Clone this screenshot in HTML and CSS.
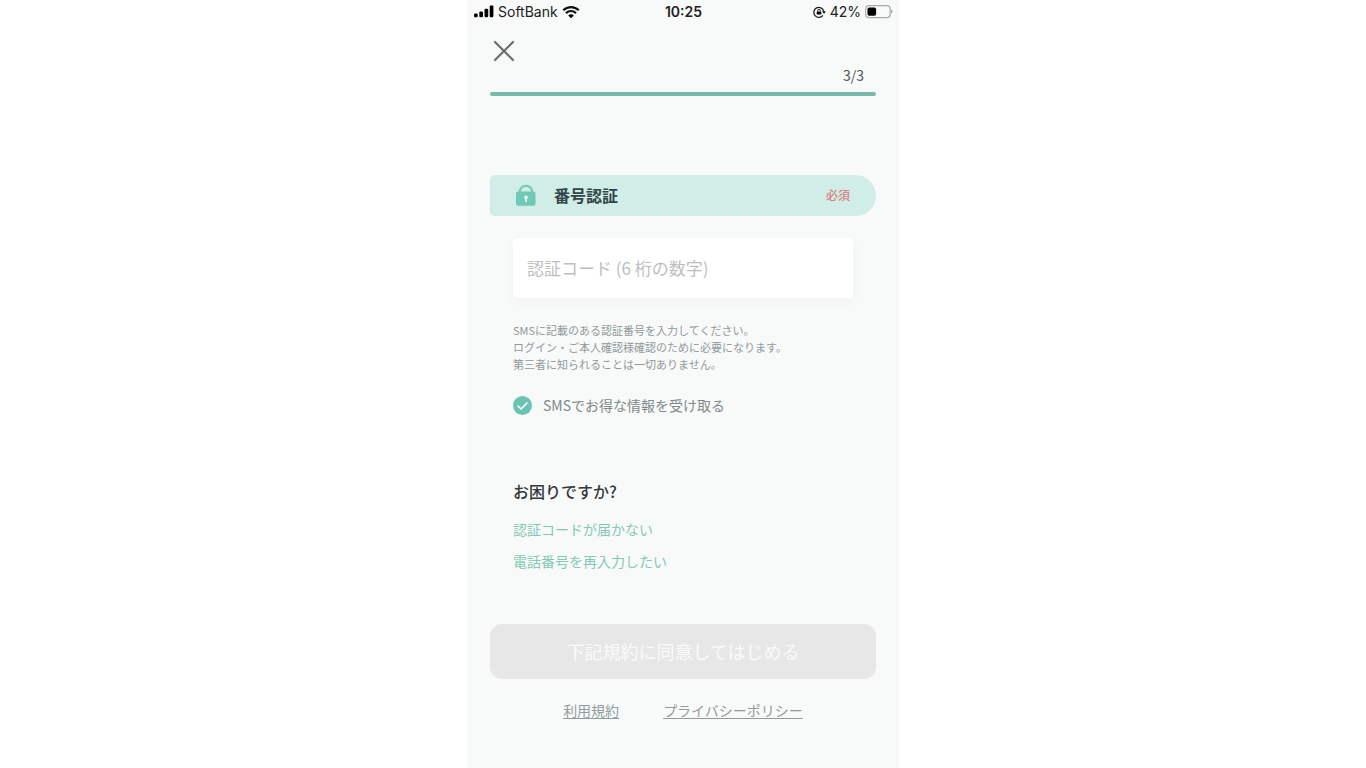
FILE: index.html
```html
<!DOCTYPE html>
<html lang="ja">
<head>
<meta charset="utf-8">
<meta name="viewport" content="width=device-width, initial-scale=1">
<title>番号認証</title>
<link rel="stylesheet" href="styles.css">
</head>
<body>
<div class="screen">
  <header class="status">
    <div class="status-left">
      <svg width="20" height="14" viewBox="0 0 20 14" aria-hidden="true"><rect x="0" y="8.500" width="3.700" height="3.800" rx="1.200"/><rect x="5.300" y="6.500" width="3.700" height="5.800" rx="1.200"/><rect x="10.500" y="3.700" width="3.700" height="8.600" rx="1.200"/><rect x="15.700" y=".4" width="3.700" height="11.900" rx="1.200"/></svg>
      <span>SoftBank</span>
      <svg width="18" height="14" viewBox="0 0 18 14" aria-hidden="true"><path d="M1.300 5.300C5.500 1 12.500 1 16.700 5.300" fill="none" stroke="#111" stroke-width="2.300"/><path d="M4 8.100c2.900-2.800 7.100-2.800 10 0" fill="none" stroke="#111" stroke-width="2.200"/><path d="M9 13.200 6.200 10.400c1.600-1.500 4-1.500 5.600 0z"/></svg>
    </div>
    <time class="clock">10:25</time>
    <div class="status-right">
      <svg width="14" height="14" viewBox="0 0 14 14" aria-hidden="true"><path d="M10.900 10.300A5 5 0 1 1 11.700 6.200" fill="none" stroke="#222" stroke-width="1.300"/><path d="M10.200 6.300h3.400l-1.500 2.800z"/><rect x="4.700" y="6.400" width="4.600" height="3.200" rx=".6"/><path d="M5.700 6.600V5.700a1.300 1.300 0 0 1 2.600 0v.9" fill="none" stroke="#222"/></svg>
      <span>42%</span>
      <svg width="28" height="14" viewBox="0 0 28 14" aria-hidden="true"><rect x=".7" y=".6" width="24.400" height="12" rx="3" fill="none" stroke="#aaa" stroke-width="1.200"/><rect x="2.500" y="2.400" width="8.600" height="8.400" rx="1.800" fill="#000"/><path d="M26 4.600c2 .6 2 3.400 0 4z" fill="#aaa"/></svg>
    </div>
  </header>

  <main class="content">
    <button class="close" type="button" aria-label="閉じる">
      <svg width="22" height="22" viewBox="0 0 22 22" aria-hidden="true"><path d="M2 2 20 20M20 2 2 20" fill="none" stroke="#6c6e6e" stroke-width="2.200" stroke-linecap="round"/></svg>
    </button>
    <div class="step">3/3</div>
    <div class="progress" role="progressbar" aria-label="進捗" aria-valuemin="0" aria-valuemax="3" aria-valuenow="3"></div>

    <form class="form">
      <div class="section-head">
        <svg class="lock" width="20" height="22" viewBox="0 0 20 22" aria-hidden="true"><path d="M4 9V7.200a6 5.400 0 0 1 12 0V9" fill="none" stroke="#78cbb9" stroke-width="2.200"/><rect x="0" y="7.500" width="19.500" height="14.300" rx="2" fill="#70c8b6"/><circle cx="10" cy="13.300" r="1.900" fill="#e4f7f3"/><path d="M9.100 14h1.800v4H9.100z" fill="#e4f7f3"/></svg>
        <label class="section-title" for="code">番号認証</label>
        <span class="required">必須</span>
      </div>
      <div class="fields">
        <input class="code" id="code" type="text" inputmode="numeric" maxlength="6" placeholder="認証コード (6 桁の数字)">
        <p class="note">SMSに記載のある認証番号を入力してください。<br>ログイン・ご本人確認様確認のために必要になります。<br>第三者に知られることは一切ありません。</p>
        <label class="optin"><input class="optin-box" type="checkbox" checked><span>SMSでお得な情報を受け取る</span></label>
        <section class="help">
          <h2 class="help-title">お困りですか?</h2>
          <a class="help-link" href="#resend">認証コードが届かない</a>
          <a class="help-link" href="#phone">電話番号を再入力したい</a>
        </section>
      </div>
      <button class="submit" type="submit" disabled>下記規約に同意してはじめる</button>
    </form>
    <nav class="legal">
      <a href="#terms">利用規約</a>
      <a href="#privacy">プライバシーポリシー</a>
    </nav>
  </main>
</div>
</body>
</html>
```
FILE: styles.css
```css
* { box-sizing: border-box; }

body {
  margin: 0;
  background: #fff;
  color: #505657;
  font-family: "Noto Sans CJK JP", sans-serif;
  font-size: 14px;
  line-height: 20px;
}

.screen {
  max-width: 432px;
  min-height: 100vh;
  margin: 0 auto;
  background: #f7faf9;
}

.status {
  display: grid;
  grid-template-columns: 1fr auto 1fr;
  align-items: center;
  height: 24px;
  padding: 0 6px 0 7px;
  color: #222;
  font-family: Inter, sans-serif;
  font-size: 14px;
}

.status-left,
.status-right {
  display: flex;
  align-items: center;
  gap: 4px;
}

.status-right { justify-content: flex-end; }
.clock { font-weight: 600; }
.status svg { flex: none; }

.content {
  display: flex;
  flex-direction: column;
  padding: 12px 23px 24px;
}

.close {
  display: flex;
  align-self: flex-start;
  padding: 4px 3px 3px;
  border: 0;
  background: none;
}

.step {
  padding-right: 12px;
  text-align: right;
}

.progress {
  height: 4px;
  margin-top: 7px;
  border-radius: 2px;
  background: #76baaa;
}

.form {
  display: flex;
  flex-direction: column;
  margin-top: 79px;
}

.section-head {
  display: flex;
  align-items: center;
  height: 41px;
  padding: 0 26px 2px;
  border-radius: 5px 21px 21px 5px;
  background: #d0ede8;
}

.section-title {
  margin-left: 18px;
  color: #304548;
  font-size: 16px;
  font-weight: 700;
}

.required {
  margin-left: auto;
  color: #dc817e;
  font-size: 12px;
  font-weight: 500;
}

.fields {
  display: flex;
  flex-direction: column;
  padding: 22px 23px 0;
}

.code {
  width: 100%;
  height: 60px;
  padding: 0 14px 2px;
  border: 0;
  border-radius: 4px;
  background: #fff;
  box-shadow: 0 4px 12px #00000008;
  color: #3d4344;
  font: inherit;
  font-size: 17px;
}

.code::placeholder { color: #bdbfbf; opacity: 1; }

.note {
  margin: 24px 0 0;
  color: #929999;
  font-size: 11px;
  line-height: 17px;
}

.optin {
  display: flex;
  align-items: center;
  gap: 11px;
  margin-top: 22px;
  color: #818989;
}

.optin-box {
  flex: none;
  width: 19px;
  height: 19px;
  margin: 0;
  appearance: none;
  border-radius: 50%;
  background: #6cc3b2 url("data:image/svg+xml,%3Csvg xmlns='http://www.w3.org/2000/svg' viewBox='0 0 19 19'%3E%3Cpath d='M5 10l3 3 6-6' fill='none' stroke='white' stroke-width='1.600' stroke-linecap='round' stroke-linejoin='round'/%3E%3C/svg%3E") center / contain no-repeat;
}

.help {
  display: flex;
  flex-direction: column;
  align-items: flex-start;
  gap: 12px;
  margin-top: 64px;
}

.help-title {
  margin: 0 0 4px;
  color: #333839;
  font-size: 16px;
  font-weight: 500;
  line-height: 24px;
}

.help-link {
  color: #86c8b6;
  text-decoration: none;
}

.submit {
  height: 55px;
  margin-top: 53px;
  padding: 0 6px 2px;
  border: 0;
  border-radius: 12px;
  background: #e7e7e7;
  color: #fafafa;
  font: inherit;
  font-size: 18px;
}

.legal {
  display: flex;
  justify-content: center;
  gap: 44px;
  margin-top: 21px;
}

.legal a {
  color: #939c9c;
  text-underline-offset: 2px;
}
```
